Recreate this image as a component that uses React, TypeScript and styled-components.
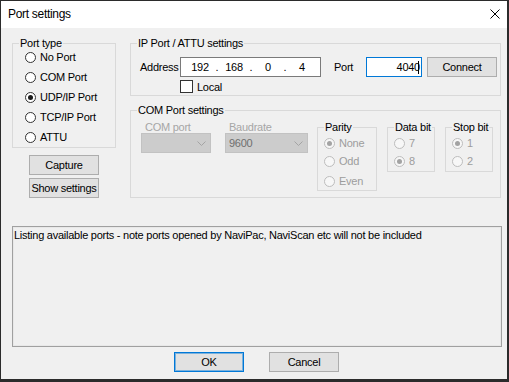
import React from 'react';
import styled, { createGlobalStyle } from 'styled-components';

const GlobalStyle = createGlobalStyle`
  html, body { margin: 0; padding: 0; background: #ffffff; }
  body { font-family: "Liberation Sans", Arial, sans-serif; font-size: 11px; }
  * { box-sizing: border-box; }
`;

const Window = styled.div`
  width: 509px;
  height: 382px;
  background: #f0f0f0;
  border-style: solid;
  border-color: #2b2b2b;
  border-width: 1px 2px 3px 1px;
  display: flex;
  flex-direction: column;
  font-family: "Liberation Sans", Arial, sans-serif;
  font-size: 11px;
  letter-spacing: -0.25px;
  color: #000;
  overflow: hidden;
`;

const TitleBar = styled.div`
  flex: none;
  height: 27px;
  background: #ffffff;
  display: flex;
  align-items: center;
  justify-content: space-between;
  padding: 0 7px 1px 7px;
`;

const Title = styled.span`
  font-size: 12px;
  letter-spacing: -0.3px;
  line-height: 14px;
`;

const Body = styled.div`
  flex: 1;
  display: flex;
  flex-direction: column;
  padding: 9px 6px 0 10px;
`;

const TopArea = styled.div`
  display: flex;
  align-items: flex-start;
  gap: 14px;
  padding-left: 1px;
`;

const LeftCol = styled.div`
  width: 104px;
  display: flex;
  flex-direction: column;
  align-items: center;
`;

const RightCol = styled.div`
  width: 371px;
  display: flex;
  flex-direction: column;
`;

const GroupBox = styled.fieldset<{ $w?: number; $mt?: number; $pb?: number }>`
  margin: ${(p) => p.$mt ?? 0}px 0 0 0;
  padding: 0 0 ${(p) => p.$pb ?? 0}px 0;
  border: 1px solid #d9d9d9;
  width: ${(p) => (p.$w ? `${p.$w}px` : '100%')};
  min-width: 0;
  flex: none;
`;

const Legend = styled.legend`
  margin-left: 6px;
  padding: 0 1px;
  line-height: 13px;
  color: #000;
`;

const RadioList = styled.div<{ $pl: number; $mt?: number }>`
  display: flex;
  flex-direction: column;
  padding-left: ${(p) => p.$pl}px;
  margin-top: ${(p) => p.$mt ?? 0}px;
`;

const RadioRow = styled.div<{ $h: number; $mt?: number; $disabled?: boolean }>`
  height: ${(p) => p.$h}px;
  margin-top: ${(p) => p.$mt ?? 0}px;
  display: flex;
  align-items: center;
  gap: 4px;
  color: ${(p) => (p.$disabled ? '#9d9d9d' : '#000')};
  white-space: nowrap;
`;

const RadioCircle = styled.span<{ $checked?: boolean; $disabled?: boolean }>`
  flex: none;
  width: 11px;
  height: 11px;
  border-radius: 50%;
  border: 1px solid ${(p) => (p.$disabled ? '#bdbdbd' : '#333333')};
  background: ${(p) => (p.$disabled ? '#f7f7f7' : '#ffffff')};
  display: flex;
  align-items: center;
  justify-content: center;
  &::after {
    content: '';
    width: 5px;
    height: 5px;
    border-radius: 50%;
    background: ${(p) => (p.$disabled ? '#a3a3a3' : '#1a1a1a')};
    display: ${(p) => (p.$checked ? 'block' : 'none')};
  }
`;

const Button = styled.div<{ $w: number; $default?: boolean }>`
  width: ${(p) => p.$w}px;
  height: 20px;
  flex: none;
  background: #e1e1e1;
  border: 1px solid ${(p) => (p.$default ? '#0078d7' : '#adadad')};
  box-shadow: ${(p) => (p.$default ? 'inset 0 0 0 1px rgba(0,120,215,0.45)' : 'none')};
  display: flex;
  align-items: center;
  justify-content: center;
  white-space: nowrap;
`;

const ButtonStack = styled.div`
  margin-top: 7px;
  display: flex;
  flex-direction: column;
  gap: 3px;
`;

const FieldRow = styled.div<{ $mt: number; $pl: number; $h: number }>`
  display: flex;
  align-items: center;
  height: ${(p) => p.$h}px;
  margin-top: ${(p) => p.$mt}px;
  padding-left: ${(p) => p.$pl}px;
`;

const FieldLabel = styled.span<{ $w: number; $ml?: number }>`
  width: ${(p) => p.$w}px;
  margin-left: ${(p) => p.$ml ?? 0}px;
  flex: none;
  white-space: nowrap;
`;

const TextBox = styled.div<{ $w: number; $focused?: boolean; $align?: string }>`
  width: ${(p) => p.$w}px;
  height: 20px;
  flex: none;
  background: #ffffff;
  border: 1px solid ${(p) => (p.$focused ? '#0078d7' : '#7a7a7a')};
  display: flex;
  align-items: center;
  justify-content: ${(p) => p.$align ?? 'flex-start'};
  padding: 0 2px 0 0;
`;

const IpFields = styled.div`
  display: grid;
  grid-template-columns: 30px 4px 30px 4px 30px 4px 30px;
  padding-left: 4px;
  width: 100%;
  text-align: center;
`;

const Caret = styled.span`
  display: inline-block;
  width: 1px;
  height: 13px;
  background: #000;
  margin-left: -2px;
`;

const ConnectButton = styled(Button)`
  margin-left: 5px;
`;

const CheckBox = styled.span`
  width: 13px;
  height: 13px;
  flex: none;
  border: 1px solid #333333;
  background: #ffffff;
  margin-right: 4px;
`;

const ComRow = styled.div`
  display: flex;
  align-items: flex-start;
  padding-left: 10px;
`;

const ComboColumn = styled.div<{ $w: number; $ml?: number }>`
  width: ${(p) => p.$w}px;
  margin-left: ${(p) => p.$ml ?? 0}px;
  margin-top: 4px;
  display: flex;
  flex-direction: column;
  flex: none;
`;

const DisabledLabel = styled.span`
  line-height: 12px;
  height: 12px;
  padding-left: 4px;
  color: #a6a6a6;
  white-space: nowrap;
`;

const Combo = styled.div`
  height: 20px;
  background: #cccccc;
  border: 1px solid #c2c2c2;
  display: flex;
  align-items: center;
  justify-content: space-between;
  padding: 0 4px 0 3px;
  color: #6f6f6f;
`;

const SmallGroup = styled(GroupBox)<{ $ml: number }>`
  margin-left: ${(p) => p.$ml}px;
  margin-top: 4px;
`;

const LogBox = styled.div`
  margin-top: 28px;
  margin-left: 1px;
  width: 490px;
  height: 121px;
  flex: none;
  border: 1px solid #a0a0a0;
  box-shadow: inset 0 0 0 1px #e8e8e8;
  padding: 2px 0 0 1px;
  line-height: 13px;
  white-space: nowrap;
`;

const DialogButtons = styled.div`
  margin-top: 5px;
  padding-left: 163px;
  display: flex;
  gap: 25px;
`;

const Chevron = () => (
  <svg width="9" height="5" viewBox="0 0 9 5">
    <polyline points="0.5,0.5 4.5,4.5 8.5,0.5" fill="none" stroke="#a4a4a4" strokeWidth="1" />
  </svg>
);

const CloseIcon = () => (
  <svg width="10" height="10" viewBox="0 0 10 10">
    <line x1="0.5" y1="0.5" x2="9.5" y2="9.5" stroke="#000" strokeWidth="1" />
    <line x1="9.5" y1="0.5" x2="0.5" y2="9.5" stroke="#000" strokeWidth="1" />
  </svg>
);

const portTypes = [
  { label: 'No Port', checked: false },
  { label: 'COM Port', checked: false },
  { label: 'UDP/IP Port', checked: true },
  { label: 'TCP/IP Port', checked: false },
  { label: 'ATTU', checked: false },
];

const ipParts = ['192', '168', '0', '4'];

export default function App() {
  return (
    <>
      <GlobalStyle />
      <Window>
        <TitleBar>
          <Title>Port settings</Title>
          <CloseIcon />
        </TitleBar>
        <Body>
          <TopArea>
            <LeftCol>
              <GroupBox $w={104}>
                <Legend>Port type</Legend>
                <RadioList $pl={12} $mt={-3}>
                  {portTypes.map((p) => (
                    <RadioRow key={p.label} $h={20}>
                      <RadioCircle $checked={p.checked} />
                      {p.label}
                    </RadioRow>
                  ))}
                </RadioList>
              </GroupBox>
              <ButtonStack>
                <Button $w={70}>Capture</Button>
                <Button $w={70}>Show settings</Button>
              </ButtonStack>
            </LeftCol>
            <RightCol>
              <GroupBox $pb={2}>
                <Legend>IP Port / ATTU settings</Legend>
                <FieldRow $mt={7} $pl={9} $h={20}>
                  <FieldLabel $w={40}>Address</FieldLabel>
                  <TextBox $w={141}>
                    <IpFields>
                      {ipParts.map((part, i) => (
                        <React.Fragment key={i}>
                          {i > 0 && <span>.</span>}
                          <span>{part}</span>
                        </React.Fragment>
                      ))}
                    </IpFields>
                  </TextBox>
                  <FieldLabel $w={32} $ml={13}>Port</FieldLabel>
                  <TextBox $w={56} $focused $align="flex-end">
                    4040
                    <Caret />
                  </TextBox>
                  <ConnectButton $w={70}>Connect</ConnectButton>
                </FieldRow>
                <FieldRow $mt={3} $pl={49} $h={13}>
                  <CheckBox />
                  Local
                </FieldRow>
              </GroupBox>
              <GroupBox $mt={8} $pb={6}>
                <Legend>COM Port settings</Legend>
                <ComRow>
                  <ComboColumn $w={70}>
                    <DisabledLabel>COM port</DisabledLabel>
                    <Combo>
                      <span />
                      <Chevron />
                    </Combo>
                  </ComboColumn>
                  <ComboColumn $w={83} $ml={14}>
                    <DisabledLabel>Baudrate</DisabledLabel>
                    <Combo>
                      <span>9600</span>
                      <Chevron />
                    </Combo>
                  </ComboColumn>
                  <SmallGroup $w={60} $ml={9}>
                    <Legend>Parity</Legend>
                    <RadioList $pl={6}>
                      <RadioRow $h={18} $disabled>
                        <RadioCircle $checked $disabled />
                        None
                      </RadioRow>
                      <RadioRow $h={18} $disabled>
                        <RadioCircle $disabled />
                        Odd
                      </RadioRow>
                      <RadioRow $h={18} $mt={2} $disabled>
                        <RadioCircle $disabled />
                        Even
                      </RadioRow>
                    </RadioList>
                  </SmallGroup>
                  <SmallGroup $w={48} $ml={10} $pb={1}>
                    <Legend>Data bit</Legend>
                    <RadioList $pl={6}>
                      <RadioRow $h={18} $disabled>
                        <RadioCircle $disabled />
                        7
                      </RadioRow>
                      <RadioRow $h={18} $disabled>
                        <RadioCircle $checked $disabled />
                        8
                      </RadioRow>
                    </RadioList>
                  </SmallGroup>
                  <SmallGroup $w={48} $ml={10} $pb={1}>
                    <Legend>Stop bit</Legend>
                    <RadioList $pl={6}>
                      <RadioRow $h={18} $disabled>
                        <RadioCircle $checked $disabled />
                        1
                      </RadioRow>
                      <RadioRow $h={18} $disabled>
                        <RadioCircle $disabled />
                        2
                      </RadioRow>
                    </RadioList>
                  </SmallGroup>
                </ComRow>
              </GroupBox>
            </RightCol>
          </TopArea>
          <LogBox>
            Listing available ports - note ports opened by NaviPac, NaviScan etc will not be included
          </LogBox>
          <DialogButtons>
            <Button $w={70} $default>OK</Button>
            <Button $w={70}>Cancel</Button>
          </DialogButtons>
        </Body>
      </Window>
    </>
  );
}
